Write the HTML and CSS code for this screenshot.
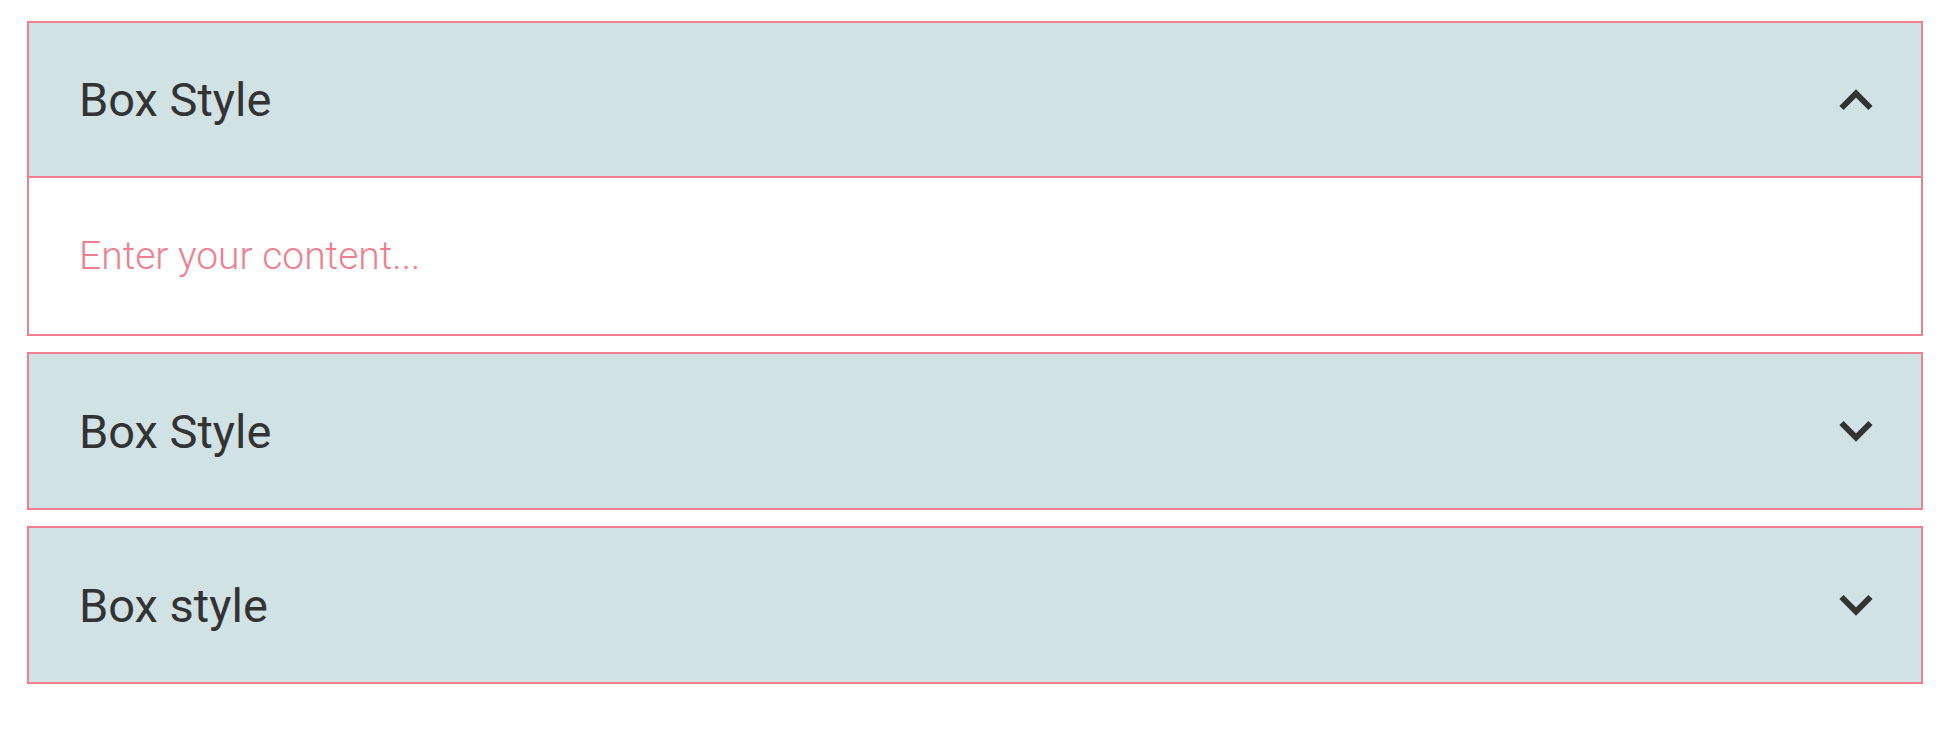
FILE: index.html
```html
<!DOCTYPE html>
<html>
<head>
<meta charset="utf-8">
<link rel="stylesheet" href="styles.css">
</head>
<body>
<div class="accordion">
  <div class="item open">
    <div class="head head-open">
      <span class="title">Box Style</span>
      <svg class="chev" width="36" height="24" viewBox="0 0 36 24"><path d="M3.5 20 L18 5.5 L32.5 20" fill="none" stroke="#333" stroke-width="6"/></svg>
    </div>
    <div class="body"><span class="content">Enter your content...</span></div>
  </div>
  <div class="item">
    <div class="head">
      <span class="title">Box Style</span>
      <svg class="chev" width="36" height="24" viewBox="0 0 36 24"><path d="M3.5 4 L18 18.5 L32.5 4" fill="none" stroke="#333" stroke-width="6"/></svg>
    </div>
  </div>
  <div class="item">
    <div class="head">
      <span class="title">Box style</span>
      <svg class="chev" width="36" height="24" viewBox="0 0 36 24"><path d="M3.5 4 L18 18.5 L32.5 4" fill="none" stroke="#333" stroke-width="6"/></svg>
    </div>
  </div>
</div>
</body>
</html>
```

FILE: styles.css
```css
html, body {
  margin: 0;
  padding: 0;
  background: #ffffff;
}
.accordion {
  display: flex;
  flex-direction: column;
  gap: 16px;
  padding: 21px 31px 0 27px;
}
.item {
  display: flex;
  flex-direction: column;
}
.head {
  box-sizing: border-box;
  height: 158px;
  border: 2px solid #f07f8f;
  background: #d0e2e4;
  display: flex;
  align-items: center;
  justify-content: space-between;
  padding: 0 47px 0 50px;
}
.head-open {
  height: 157px;
}
.title {
  font-family: Roboto, "Liberation Sans", sans-serif;
  font-size: 47px;
  color: #333333;
  line-height: 1;
}
.chev {
  display: block;
}
.body {
  box-sizing: border-box;
  height: 158px;
  border: 2px solid #f07f8f;
  border-top: 0;
  display: flex;
  align-items: center;
  padding: 0 50px;
}
.content {
  font-family: Roboto, "Liberation Sans", sans-serif;
  font-weight: 300;
  font-size: 39px;
  color: #f07f8f;
  line-height: 1;
}
```
